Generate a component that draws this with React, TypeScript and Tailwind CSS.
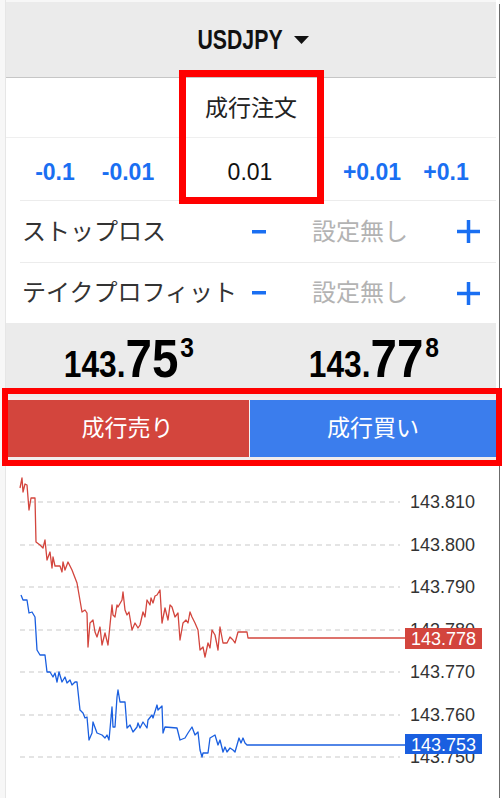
import { FC } from "react";

type Pt = [number, number];

const RED: Pt[] = [
    [20, 488], [22, 478], [23, 492], [25, 484], [27, 485], [29, 510], [31, 498], [35, 498], [36, 542], [40, 545],
    [43, 548], [45, 540], [47, 560], [50, 552], [52, 568], [53, 557], [55, 566], [60, 566], [62, 572], [63, 562],
    [65, 570], [68, 562], [72, 570], [77, 583], [82, 612], [85, 610], [87, 613], [88, 647], [90, 623], [93, 620],
    [95, 632], [97, 637], [100, 627], [102, 645], [105, 633], [108, 645], [110, 625], [112, 605], [113, 615],
    [115, 617], [117, 605], [118, 607], [122, 600], [123, 592], [125, 610], [127, 615], [129, 612], [132, 630],
    [135, 623], [138, 628], [140, 625], [143, 612], [145, 617], [147, 600], [150, 605], [151, 598], [153, 603],
    [155, 596], [157, 595], [160, 590], [162, 623], [165, 608], [168, 620], [170, 605], [172, 607], [175, 617],
    [178, 613], [180, 640], [183, 623], [186, 620], [188, 623], [190, 612], [192, 617], [195, 623], [198, 630],
    [200, 650], [203, 647], [205, 657], [208, 643], [210, 648], [212, 630], [215, 635], [218, 650], [220, 627],
    [223, 643], [227, 643], [230, 637], [233, 640], [235, 643], [238, 632], [247, 632], [248, 638], [405, 638],
];

const BLUE: Pt[] = [
    [21, 595], [23, 600], [27, 600], [29, 613], [32, 612], [35, 617], [37, 650], [40, 655], [45, 655], [47, 672],
    [50, 672], [53, 677], [55, 673], [57, 682], [59, 672], [62, 682], [65, 677], [67, 683], [70, 680], [72, 685],
    [75, 682], [77, 682], [80, 710], [83, 713], [85, 718], [87, 717], [89, 740], [92, 733], [93, 722], [97, 733],
    [102, 735], [105, 738], [107, 735], [109, 740], [112, 707], [113, 727], [115, 727], [117, 697], [118, 690],
    [120, 702], [125, 702], [127, 728], [130, 725], [133, 732], [137, 727], [138, 723], [140, 728], [143, 722],
    [147, 728], [148, 720], [152, 715], [153, 718], [157, 705], [158, 710], [162, 706], [163, 733], [165, 727],
    [177, 728], [180, 740], [185, 738], [188, 733], [192, 727], [195, 735], [198, 732], [200, 750], [202, 757],
    [203, 753], [208, 753], [210, 738], [215, 735], [218, 745], [220, 740], [223, 752], [225, 747], [227, 752],
    [230, 748], [233, 750], [235, 752], [237, 745], [239, 738], [241, 743], [243, 738], [245, 743], [247, 745],
    [405, 745],
];

const GRID = [
    { y: 502, label: "143.810" },
    { y: 545, label: "143.800" },
    { y: 587, label: "143.790" },
    { y: 630, label: "143.780" },
    { y: 672, label: "143.770" },
    { y: 715, label: "143.760" },
    { y: 757, label: "143.750" },
];

const toPath = (pts: Pt[]) => pts.map((p, i) => `${i ? "L" : "M"}${p[0]},${p[1]}`).join(" ");

const Minus: FC = () => (
    <svg width="14" height="4" viewBox="0 0 14 4">
        <rect x="0" y="0" width="14" height="3.5" fill="#1a6ff2" />
    </svg>
);

const Plus: FC = () => (
    <svg width="23" height="23" viewBox="0 0 23 23">
        <rect x="0" y="9.75" width="23" height="3.5" fill="#1a6ff2" />
        <rect x="9.75" y="0" width="3.5" height="23" fill="#1a6ff2" />
    </svg>
);

// condensed look: no narrow face installed, so squeeze Liberation Sans Bold
const Price: FC<{ big: string; sup: string }> = ({ big, sup }) => (
    <div className="flex flex-1 justify-center">
        <div className="flex items-baseline font-bold text-black scale-x-[0.88] origin-center">
            <span className="text-[36px] leading-none">143.</span>
            <span className="text-[54px] leading-none">{big}</span>
            <span className="text-[28px] leading-none self-start mt-[3px] ml-[2px]">{sup}</span>
        </div>
    </div>
);

const SettingRow: FC<{ label: string; border?: boolean }> = ({ label, border }) => (
    <div className={`flex items-center ml-[14px] ${border ? "h-[62px] border-b border-[#ececec]" : "h-[60px]"}`}>
        <div className="w-[226px] pl-[2px] text-[24px] text-[#333] whitespace-nowrap">{label}</div>
        <div className="w-[26px] flex justify-center"><Minus /></div>
        <div className="w-[176px] text-center text-[24px] text-[#b3b3b3]">設定無し</div>
        <div className="w-[40px] flex justify-center"><Plus /></div>
    </div>
);

const App: FC = () => {
    return (
        <div className="relative flex w-[502px] h-[798px] overflow-hidden bg-[#f7f7f7] font-['Liberation_Sans','Noto_Sans_CJK_JP',sans-serif]">
            <div className="w-[6px] border-r border-[#e6e6e6]" />

            <div className="flex flex-col w-[490px] pt-[2px]">
                <div className="flex justify-center items-center gap-[10px] h-[77px] pl-[4px] bg-[#ebebeb] border-b border-[#c6c6c6]">
                    <div className="flex justify-center w-[86px] text-[28px] font-bold text-[#111]">
                        <span className="shrink-0 scale-x-[0.76] origin-center">USDJPY</span>
                    </div>
                    <svg width="15" height="8" viewBox="0 0 15 8">
                        <path d="M0 0 L15 0 L7.5 8 Z" fill="#111" />
                    </svg>
                </div>

                <div className="bg-white flex flex-col">
                    <div className="flex justify-center items-center h-[60px] border-b border-[#efefef] text-[23px] text-[#222]">
                        成行注文
                    </div>

                    <div className="flex items-center pl-[14px] pt-[5px] h-[62px] text-[23px]">
                        <div className="w-[70px] text-center font-bold text-[#1a6ff2]">-0.1</div>
                        <div className="w-[76px] text-center font-bold text-[#1a6ff2]">-0.01</div>
                        <div className="w-[168px] text-center text-[#111]">0.01</div>
                        <div className="w-[76px] text-center font-bold text-[#1a6ff2]">+0.01</div>
                        <div className="w-[72px] text-center font-bold text-[#1a6ff2]">+0.1</div>
                    </div>

                    <div className="ml-[14px] border-t border-[#ececec]" />
                    <SettingRow label="ストップロス" border />
                    <SettingRow label="テイクプロフィット" />
                </div>

                <div className="flex items-end h-[74px] pb-[12px] bg-[#ebebeb]">
                    <Price big="75" sup="3" />
                    <Price big="77" sup="8" />
                </div>

                <div className="flex py-[3px] bg-[#f1ecec]">
                    <div className="flex justify-center items-center w-[243px] h-[57px] bg-[#d3453d] text-[23px] text-white">
                        成行売り
                    </div>
                    <div className="w-[1px] bg-[#f3f3f3]" />
                    <div className="flex justify-center items-center flex-1 h-[57px] bg-[#3b7ded] text-[23px] text-white">
                        成行買い
                    </div>
                </div>

                <div className="flex-1 bg-white">
                    <svg width="490" height="338" viewBox="0 0 490 338">
                        <g transform="translate(-6,-460)">
                            {GRID.map((g) => (
                                <g key={g.label}>
                                    <line x1="20" y1={g.y} x2="400" y2={g.y} stroke="#c9c9c9" strokeDasharray="5 4" strokeWidth="1" />
                                    <text x="410" y={g.y + 6} fontSize="18" fill="#333" fontFamily="Liberation Sans, sans-serif">
                                        {g.label}
                                    </text>
                                </g>
                            ))}
                            <path d={toPath(RED)} fill="none" stroke="#d3453d" strokeWidth="1.3" strokeLinejoin="round" />
                            <path d={toPath(BLUE)} fill="none" stroke="#1a5fe0" strokeWidth="1.3" strokeLinejoin="round" />
                            <rect x="405" y="628" width="77" height="21" fill="#d3453d" />
                            <text x="443.5" y="645" fontSize="18" fill="#fff" textAnchor="middle" fontFamily="Liberation Sans, sans-serif">
                                143.778
                            </text>
                            <rect x="405" y="734" width="77" height="20" fill="#1a5fe0" />
                            <text x="443.5" y="750.5" fontSize="18" fill="#fff" textAnchor="middle" fontFamily="Liberation Sans, sans-serif">
                                143.753
                            </text>
                        </g>
                    </svg>
                </div>
            </div>

            <div className="flex w-[6px]">
                <div className="w-[3px] bg-white" />
                <div className="w-[1px] bg-[#6b6b6b] mt-[4px]" />
                <div className="flex-1 bg-white" />
            </div>

            <div className="absolute left-[179px] top-[70px] w-[145px] h-[134px] border-[7px] border-[#ff0000]" />
            <div className="absolute left-[2px] top-[388px] w-[500px] h-[78px] border-[6px] border-[#ff0000]" />
        </div>
    );
};

export default App;
